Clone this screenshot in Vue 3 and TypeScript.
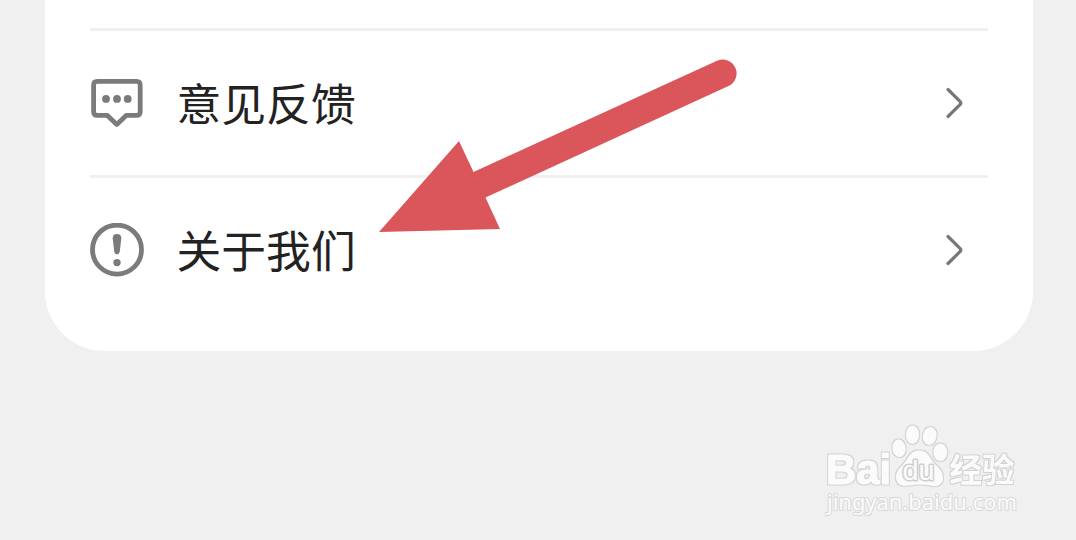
<script setup lang="ts">
interface MenuItem {
  icon: 'feedback' | 'about'
  label: string
}

const items: MenuItem[] = [
  { icon: 'feedback', label: '意见反馈' },
  { icon: 'about', label: '关于我们' },
]
</script>

<template>
  <main class="page">
    <section class="card">
      <div v-for="item in items" :key="item.icon" class="row">
        <svg v-if="item.icon === 'feedback'" class="icon" viewBox="0 0 54 54">
          <path
            class="line"
            d="M7.300 5.400H46.500Q50.200 5.400 50.200 9.100V35.700Q50.200 39.400 46.500 39.400H36.200L26.800 48.400L17.400 39.400H7.300Q3.600 39.400 3.600 35.700V9.100Q3.600 5.400 7.300 5.400Z"
          />
          <circle cx="16" cy="22.900" r="3.900" />
          <circle cx="27" cy="22.900" r="3.900" />
          <circle cx="37.700" cy="22.900" r="3.900" />
        </svg>
        <svg v-else class="icon" viewBox="0 0 54 54">
          <circle class="line" cx="27" cy="26.600" r="24.500" />
          <path d="M22.700 15.300Q22.700 11 27 11T31.300 15.300L29.800 28.500Q29.400 31.200 27 31.200T24.200 28.500Z" />
          <circle cx="27" cy="39.600" r="3.700" />
        </svg>
        <span class="label">{{ item.label }}</span>
        <svg class="chevron" viewBox="0 0 20 34">
          <path d="M4 3.500L16 15.300Q17.600 17 16 18.700L4 30.500" />
        </svg>
      </div>
    </section>

    <svg class="arrow" viewBox="0 0 360 176">
      <path d="M0 174L80 83L94.500 114L338 2.800A13.800 13.800 0 0 1 349.500 28L106.500 139.500L121 171Z" />
    </svg>

    <svg class="watermark" viewBox="0 0 200 96">
      <defs>
        <filter id="rim" x="-5%" y="-5%" width="110%" height="110%" color-interpolation-filters="sRGB">
          <feMorphology in="SourceAlpha" operator="dilate" radius="1" result="wide" />
          <feGaussianBlur in="wide" stdDeviation="0.5" result="soft" />
          <feFlood flood-color="#d3d3d3" />
          <feComposite in2="soft" operator="in" result="edge" />
          <feMerge>
            <feMergeNode in="edge" />
            <feMergeNode in="SourceGraphic" />
          </feMerge>
        </filter>
      </defs>
      <g class="mark" filter="url(#rim)">
        <text class="bai" x="1" y="64" textLength="65" lengthAdjust="spacingAndGlyphs">Bai</text>
        <ellipse cx="74" cy="28.300" rx="6.600" ry="8.800" transform="rotate(-8 74 28.300)" />
        <ellipse cx="87.500" cy="14.800" rx="6.600" ry="9.200" />
        <ellipse cx="104.700" cy="16" rx="6.800" ry="9" transform="rotate(12 104.700 16)" />
        <ellipse cx="115.300" cy="32.300" rx="6.900" ry="8.800" />
        <path d="M94 30.500C102 30.500 104 36 108 42C113 48 118 50 118 57.500C118 66 111 67 105 65.500C98 64 90 64 84 65.500C76 67 71 64 71 57C71 49 77 47 81 41C85 35 87 30.500 94 30.500Z" />
        <text class="brand" x="124.500" y="61.500" textLength="65" lengthAdjust="spacingAndGlyphs">经验</text>
      </g>
      <text class="site" x="2" y="90" textLength="190" lengthAdjust="spacingAndGlyphs">jingyan.baidu.com</text>
      <text class="du" x="77.500" y="60" textLength="32" lengthAdjust="spacingAndGlyphs">du</text>
    </svg>
  </main>
</template>

<style>
body {
  background: #f0f0f0;
}
</style>

<style scoped>
.page {
  position: relative;
  box-sizing: border-box;
  width: 1076px;
  height: 540px;
  padding: 0 43px 0 45px;
  overflow: hidden;
  background: #f0f0f0;
  font-family: "Liberation Sans", "Noto Sans CJK SC", sans-serif;
}

.card {
  box-sizing: border-box;
  height: 351px;
  padding: 28px 45px 0;
  border-radius: 0 0 60px 60px;
  background: #fff;
}

.row {
  display: flex;
  align-items: center;
  box-sizing: border-box;
  height: 147px;
  border-top: 3px solid #f0f0f0;
}

.icon {
  flex: none;
  width: 54px;
  height: 54px;
  fill: #7b7b7b;
}

.icon .line {
  fill: none;
  stroke: #7b7b7b;
  stroke-width: 4.8;
  stroke-linejoin: round;
}

.label {
  flex: 1;
  margin: 0 0 2px 32.5px;
  color: #222;
  font-family: "Noto Sans CJK SC", sans-serif;
  font-size: 44.8px;
  line-height: 66px;
}

.chevron {
  width: 20px;
  height: 34px;
  margin-right: 24.5px;
  fill: none;
  stroke: #777;
  stroke-width: 3.2;
  stroke-linecap: round;
}

.arrow {
  position: absolute;
  left: 379px;
  top: 58px;
  width: 360px;
  height: 176px;
  fill: #db565b;
}

.watermark {
  position: absolute;
  left: 825px;
  top: 420px;
  width: 200px;
  height: 96px;
}

.mark {
  fill: #fbfbfb;
}

.bai {
  font-size: 43px;
  font-weight: 700;
  stroke: #fbfbfb;
  stroke-width: 1.2;
}

.du {
  fill: #fbfbfb;
  stroke: #cfcfcf;
  stroke-width: 3;
  stroke-linejoin: round;
  paint-order: stroke;
  font-size: 27px;
}

.brand {
  font-family: "Noto Sans CJK SC", sans-serif;
  font-size: 33px;
  font-weight: 700;
}

.site {
  fill: #fbfbfb;
  stroke: #dadada;
  stroke-width: 2.2;
  stroke-linejoin: round;
  paint-order: stroke;
  font-family: "Noto Sans", sans-serif;
  font-size: 22px;
}
</style>
